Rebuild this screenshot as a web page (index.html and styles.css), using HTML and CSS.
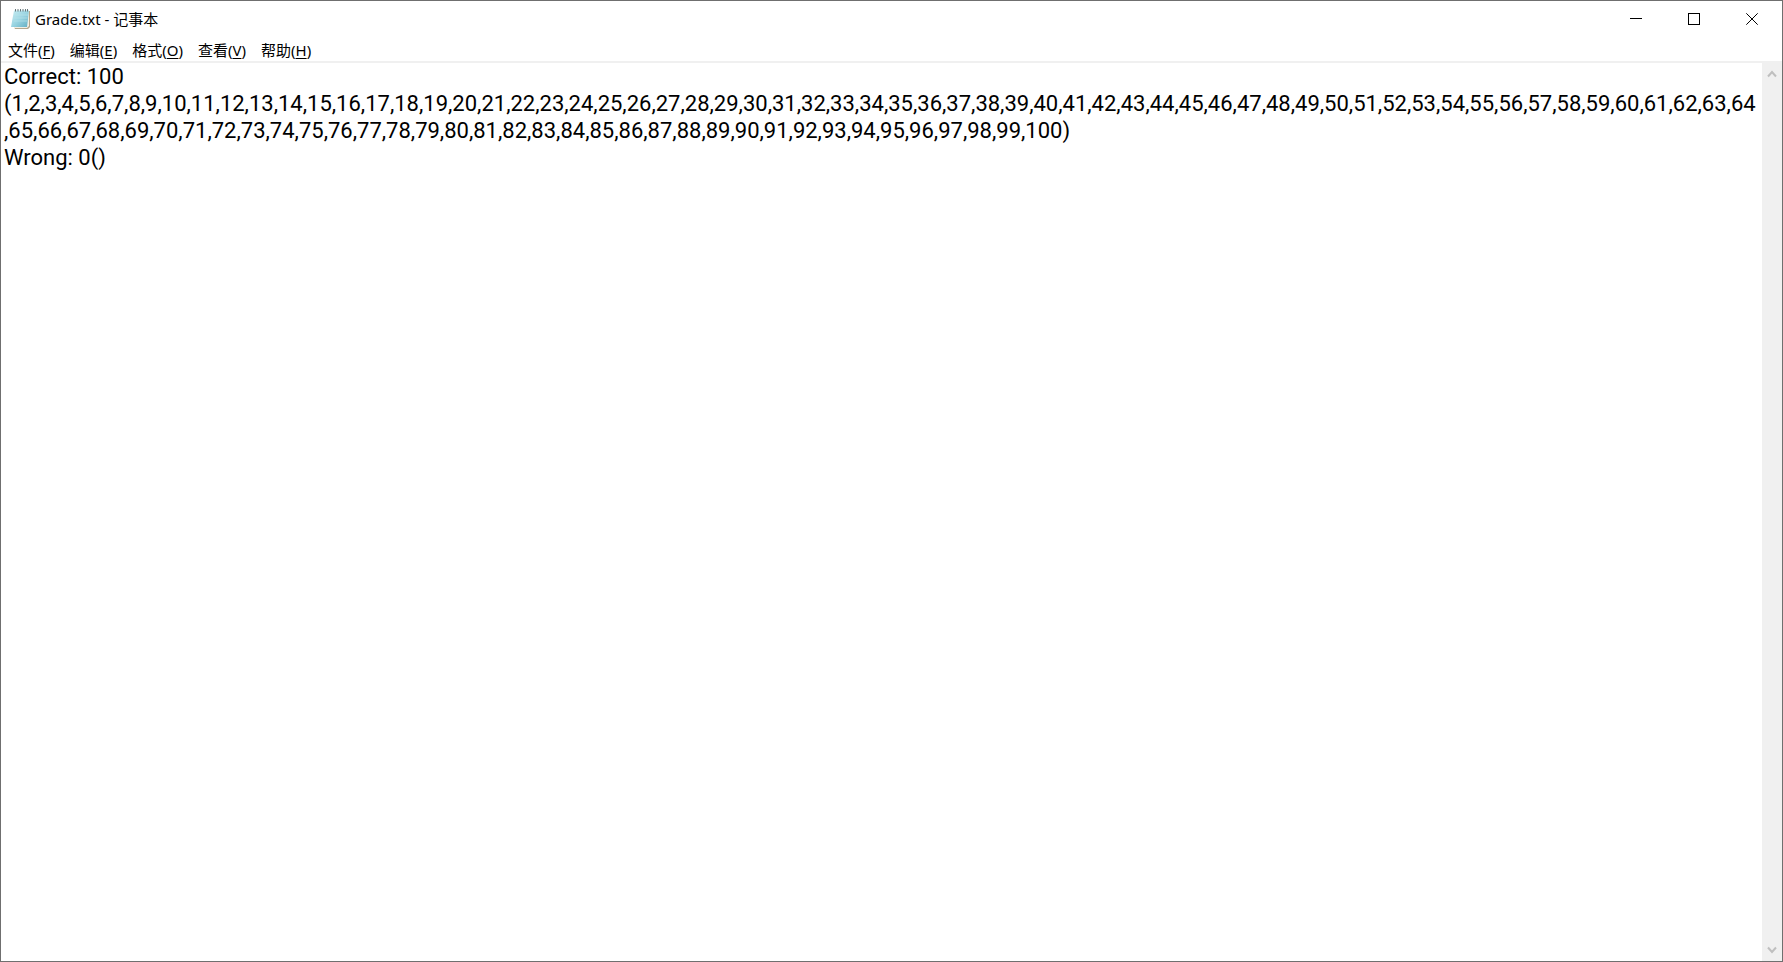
FILE: index.html
```html
<!DOCTYPE html>
<html lang="zh-CN">
<head>
<meta charset="utf-8">
<title>Grade.txt - 记事本</title>
<link rel="stylesheet" href="styles.css">
</head>
<body>
<div class="window">
  <header class="titlebar">
    <svg class="app-icon" viewBox="0 0 20 20" aria-hidden="true">
      <defs>
        <linearGradient id="cover" x1="0" y1="0" x2="1" y2="1">
          <stop offset="0" stop-color="#c9edf3"/>
          <stop offset=".5" stop-color="#9bd5e2"/>
          <stop offset="1" stop-color="#62aec3"/>
        </linearGradient>
      </defs>
      <path d="M4 2H19V18L17 20H4L3 18Z" fill="#b5a88e"/>
      <path d="M4 2H18V17L16 19H3Z" fill="#f1eee4"/>
      <path d="M3 1.500H18L16 18H0Z" fill="url(#cover)"/>
      <path d="M3.500 6H17M3 9H16.500M2.500 12H16" stroke="#b8e2ea" stroke-width=".7"/>
      <path d="M4.500 0V2.500M7 0V2.500M9.500 0V2.500M12 0V2.500M14.500 0V2.500M16.500 0V2.500" stroke="#66767a" stroke-width="1"/>
    </svg>
    <h1 class="title">Grade.txt - 记事本</h1>
    <div class="controls">
      <button class="control" type="button" aria-label="最小化"><svg viewBox="0 0 12 12" shape-rendering="crispEdges"><path d="M0 5.500H12"/></svg></button>
      <button class="control" type="button" aria-label="最大化"><svg viewBox="0 0 12 12" shape-rendering="crispEdges"><path d="M.5 .5H11.500V11.500H.5Z"/></svg></button>
      <button class="control" type="button" aria-label="关闭"><svg viewBox="0 0 12 12"><path d="M.3 .3L11.700 11.700M11.700 .3L.3 11.700"/></svg></button>
    </div>
  </header>
  <nav class="menubar">
    <button class="menu" type="button">文件(<u>F</u>)</button>
    <button class="menu" type="button">编辑(<u>E</u>)</button>
    <button class="menu" type="button">格式(<u>O</u>)</button>
    <button class="menu" type="button">查看(<u>V</u>)</button>
    <button class="menu" type="button">帮助(<u>H</u>)</button>
  </nav>
  <main class="editor">
    <textarea class="text" aria-label="文本编辑器" spellcheck="false">Correct: 100
(1,2,3,4,5,6,7,8,9,10,11,12,13,14,15,16,17,18,19,20,21,22,23,24,25,26,27,28,29,30,31,32,33,34,35,36,37,38,39,40,41,42,43,44,45,46,47,48,49,50,51,52,53,54,55,56,57,58,59,60,61,62,63,64,65,66,67,68,69,70,71,72,73,74,75,76,77,78,79,80,81,82,83,84,85,86,87,88,89,90,91,92,93,94,95,96,97,98,99,100)
Wrong: 0()</textarea>
    <div class="scrollbar">
      <button class="arrow" type="button" aria-label="向上滚动"><svg viewBox="0 0 10 8"><path d="M1 6.500L5 2L9 6.500"/></svg></button>
      <button class="arrow" type="button" aria-label="向下滚动"><svg viewBox="0 0 10 8"><path d="M1 1.500L5 6L9 1.500"/></svg></button>
    </div>
  </main>
</div>
</body>
</html>
```
FILE: styles.css
```css
* {
  box-sizing: border-box;
}

body {
  margin: 0;
}

button {
  display: flex;
  align-items: center;
  justify-content: center;
  border: 0;
  padding: 0;
  background: none;
  color: inherit;
  font: inherit;
}

.window {
  display: flex;
  flex-direction: column;
  height: 100vh;
  border: 1px solid #6f6f6f;
  background: #fff;
  color: #000;
  font: 15px/20px "Noto Sans", "Noto Sans CJK SC", sans-serif;
}

.titlebar {
  display: flex;
  align-items: center;
  height: 36px;
  padding: 0 1px 0 10px;
}

.app-icon {
  width: 20px;
  height: 20px;
  margin-right: 4px;
}

.title {
  flex: 1;
  margin: 0;
  font-size: 15px;
  font-weight: 400;
}

.controls {
  display: flex;
  align-self: stretch;
}

.control {
  width: 58px;
}

.control svg {
  width: 12px;
  height: 12px;
  fill: none;
  stroke: #000;
}

.menubar {
  display: flex;
  gap: 1px;
  height: 26px;
  padding-top: 1px;
  border-bottom: 2px solid #f0f0f0;
}

.menu {
  padding: 0 7px;
}

.menu u {
  text-underline-offset: 2px;
}

.editor {
  display: flex;
  flex: 1;
  min-height: 0;
}

.text {
  flex: 1;
  min-width: 0;
  border: 0;
  padding: 0 5px 0 3px;
  outline: 0;
  overflow: hidden;
  resize: none;
  background: none;
  color: #000;
  font: 22px/27px Roboto, "Noto Sans CJK SC", sans-serif;
  line-break: anywhere;
}

.scrollbar {
  display: flex;
  flex-direction: column;
  justify-content: space-between;
  width: 20px;
  background: #f0f0f0;
}

.arrow {
  height: 22px;
}

.arrow svg {
  width: 10px;
  height: 8px;
  fill: none;
  stroke: #bfbfbf;
  stroke-width: 2;
}
```
